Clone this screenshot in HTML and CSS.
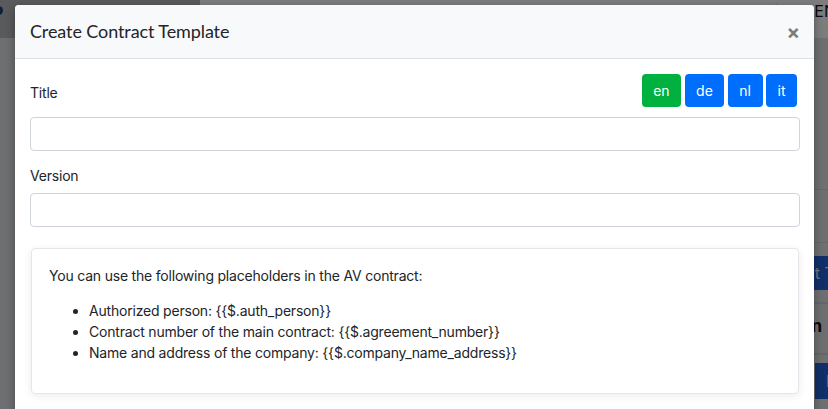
FILE: index.html
```html
<!DOCTYPE html>
<html lang="en">
<head>
<meta charset="utf-8">
<title>Create Contract Template</title>
<link rel="stylesheet" href="styles.css">
</head>
<body>
<div class="page">
  <div class="topbar">
    <div class="brand"><span class="logo-dot"></span></div>
    <div class="topnav"><span class="user">Hallo, Ollie l.</span><span class="lang">EN</span></div>
  </div>
  <div class="main">
    <div class="side"></div>
    <div class="content">
      <div class="row-a"></div>
      <div class="row-b"></div>
      <div class="toolbar"><span class="btn-bg">Create Contract Template</span></div>
      <div class="table-head"><span class="th">Action</span></div>
      <div class="table-body"><span class="btn-bg small">&#9633;</span></div>
    </div>
  </div>
</div>
<div class="backdrop"></div>
<div class="modal">
  <div class="modal-header">
    <h5 class="modal-title">Create Contract Template</h5>
    <button class="close" type="button">&times;</button>
  </div>
  <div class="modal-body">
    <div class="title-row">
      <label class="label title-label">Title</label>
      <div class="langs">
        <button class="lang-btn active">en</button>
        <button class="lang-btn">de</button>
        <button class="lang-btn">nl</button>
        <button class="lang-btn">it</button>
      </div>
    </div>
    <input class="form-control" type="text">
    <div class="form-group">
      <label class="label">Version</label>
      <input class="form-control" type="text">
    </div>
    <div class="card">
      <p>You can use the following placeholders in the AV contract:</p>
      <ul>
        <li>Authorized person: {{$.auth_person}}</li>
        <li>Contract number of the main contract: {{$.agreement_number}}</li>
        <li>Name and address of the company: {{$.company_name_address}}</li>
      </ul>
    </div>
  </div>
</div>
</body>
</html>
```
FILE: styles.css
```css
html { font-size: 14px; }
* { box-sizing: border-box; }
body {
  margin: 0;
  width: 828px;
  height: 409px;
  overflow: hidden;
  position: relative;
  font-family: Inter, "Noto Sans", sans-serif;
  color: #212529;
}
.page { width: 828px; height: 409px; background: #dcdee1; overflow: hidden; }
.topbar { display: flex; height: 38px; }
.brand { width: 200px; background: #b2b4b8; position: relative; }
.logo-dot { position: absolute; left: -6px; top: 6px; width: 9px; height: 9px; border-radius: 50%; background: #1d3f78; }
.topnav {
  flex: 1; background: #fafbfc; display: flex; justify-content: flex-end;
  align-items: flex-start; gap: 14px; font-size: 16px; line-height: 18px;
  color: #111; padding-top: 2px; white-space: nowrap;
}
.topnav .lang { margin-right: -8px; }
.main { display: flex; height: 371px; }
.side { width: 200px; border-right: 1px solid #cfd2d6; }
.content { flex: 1; display: flex; flex-direction: column; }
.row-a { height: 152px; border-bottom: 1px solid #c9ccd0; }
.row-b { height: 53px; border-bottom: 1px solid #c9ccd0; }
.toolbar {
  height: 61px; display: flex; justify-content: flex-end; align-items: flex-start;
  padding-top: 13px; border-bottom: 2px solid #c9ccd0;
}
.btn-bg {
  display: inline-block; background: #2260d2; color: #e4ecfa; font-size: 16px;
  line-height: 34px; height: 34px; padding: 0 12px; margin-right: -78px; white-space: nowrap;
}
.table-head {
  height: 51px; display: flex; justify-content: flex-end; align-items: center;
  border-bottom: 2px solid #c9ccd0; font-weight: 700; font-size: 17px; color: #111;
}
.table-head .th { margin-right: 6px; margin-top: -6px; }
.table-body { display: flex; justify-content: flex-end; padding-top: 8px; }
.btn-bg.small { margin-right: -30px; height: 36px; line-height: 36px; padding: 0 18px 0 10px; color: #b9c9e8; }
.backdrop { position: absolute; inset: 0; background: rgba(0,0,0,0.5); }

.modal {
  position: absolute; left: 15px; top: 5px; width: 799px; height: 420px;
  background: #fff; border-radius: 4px 4px 0 0;
  box-shadow: 0 3px 10px rgba(0,0,0,0.35);
}
.modal-header {
  display: flex; justify-content: space-between; align-items: center;
  background: #f8f9fa; border-bottom: 1px solid #dee2e6;
  padding: 13px 15px; border-radius: 4px 4px 0 0;
}
.modal-title {
  margin: 0; font-family: Lato, "Liberation Sans", sans-serif; font-weight: 400;
  font-size: 18px; line-height: 27px; color: #212529; letter-spacing: -0.1px;
}
.close {
  border: 0; background: none; padding: 0; margin-right: -1px; font-family: Inter, "Noto Sans", sans-serif;
  font-size: 20px; font-weight: 700; line-height: 1; color: #000; opacity: .5; cursor: pointer;
}
.modal-body { padding: 15px 14px 0 15px; }
.title-row { display: flex; justify-content: space-between; align-items: flex-end; margin-bottom: 10px; }
.label { display: inline-block; font-size: 14px; line-height: 21px; color: #212529; letter-spacing: -0.2px; }
.title-label { margin-bottom: 4px; }
.langs { display: flex; gap: 3.5px; margin-right: 3px; }
.lang-btn {
  border: 0; border-radius: 4px; background: #006efd; color: #fff;
  font-family: Inter, "Noto Sans", sans-serif; font-size: 14px; line-height: 21px;
  padding: 6px 11.5px; cursor: pointer;
}
.lang-btn.active { background: #00b140; }
.form-control {
  display: block; width: 100%; height: 33.5px; border: 1px solid #ced4da; border-radius: 4px;
  background: #fff; padding: 6px 12px; font-family: inherit; font-size: 14px;
}
.form-group { margin-top: 14.5px; }
.form-group .label { margin-bottom: 7px; }
.card {
  margin-top: 21.5px; margin-left: 1px; margin-right: 1px;
  border: 1px solid #e3e6ea; border-radius: 4px; padding: 16px 17px;
  box-shadow: 0 2px 8px rgba(0,0,0,0.08);
  font-size: 14px; line-height: 21px; color: #212529; letter-spacing: -0.2px;
}
.card p { margin: 0 0 14px; }
.card ul { margin: 0 0 14px; padding-left: 40px; }
```
